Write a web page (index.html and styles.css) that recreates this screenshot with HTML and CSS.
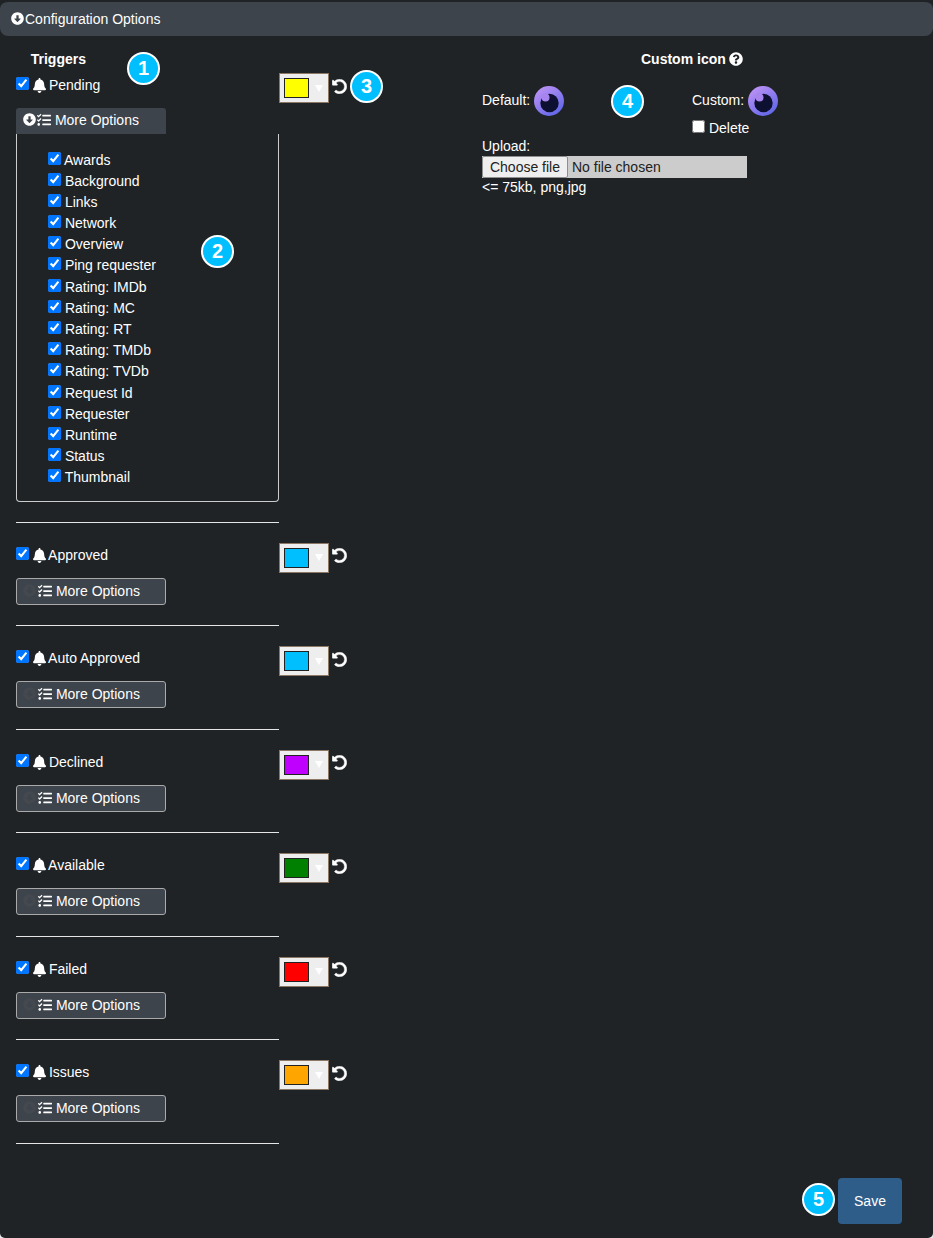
FILE: index.html
```html
<!DOCTYPE html>
<html>
<head>
  <title>Configuration Options</title>
  <link rel="stylesheet" href="styles.css">
</head>
<body>
  <svg class="defs" width="0" height="0">
    <defs>
      <symbol id="i-down" viewBox="0 0 512 512"><path d="M504 256c0 137-111 248-248 248S8 393 8 256 119 8 256 8s248 111 248 248zM212 140v116h-70.9c-10.7 0-16.1 13-8.5 20.5l114.9 114.3c4.7 4.7 12.2 4.7 16.9 0l114.9-114.3c7.6-7.6 2.2-20.5-8.5-20.5H300V140c0-6.6-5.4-12-12-12h-64c-6.6 0-12 5.4-12 12z"/></symbol>
      <symbol id="i-bell" viewBox="0 0 448 512"><path d="M224 512c35.32 0 63.97-28.65 63.97-64H160.03c0 35.35 28.65 64 63.97 64zm215.39-149.71c-19.32-20.76-55.47-51.99-55.47-154.29 0-77.7-54.48-139.9-127.94-155.16V32c0-17.67-14.32-32-31.98-32s-31.98 14.33-31.98 32v20.84C118.56 68.1 64.08 130.3 64.08 208c0 102.3-36.15 133.53-55.47 154.29-6 6.45-8.66 14.16-8.61 21.71.11 16.4 12.98 32 32.1 32h383.8c19.12 0 32-15.6 32.1-32 .05-7.55-2.61-15.27-8.61-21.71z"/></symbol>
      <symbol id="i-tasks" viewBox="0 0 512 512"><path d="M139.61 35.5a12 12 0 0 0-17 0L58.93 98.81l-22.7-22.12a12 12 0 0 0-17 0L3.53 92.41a12 12 0 0 0 0 17l47.59 47.4a12.78 12.78 0 0 0 17.61 0l15.59-15.62L156.52 69a12.09 12.09 0 0 0 .09-17zm0 159.19a12 12 0 0 0-17 0l-63.68 63.72-22.7-22.1a12 12 0 0 0-17 0L3.53 252a12 12 0 0 0 0 17L51 316.5a12.77 12.77 0 0 0 17.6 0l15.7-15.69 72.2-72.22a12 12 0 0 0 .09-16.9zM64 368c-26.49 0-48.59 21.5-48.59 48S37.53 464 64 464a48 48 0 0 0 0-96zm432 16H208a16 16 0 0 0-16 16v32a16 16 0 0 0 16 16h288a16 16 0 0 0 16-16v-32a16 16 0 0 0-16-16zm0-320H208a16 16 0 0 0-16 16v32a16 16 0 0 0 16 16h288a16 16 0 0 0 16-16V80a16 16 0 0 0-16-16zm0 160H208a16 16 0 0 0-16 16v32a16 16 0 0 0 16 16h288a16 16 0 0 0 16-16v-32a16 16 0 0 0-16-16z"/></symbol>
      <symbol id="i-undo" viewBox="0 0 512 512"><path d="M255.545 8c-66.269.119-126.438 26.233-170.86 68.685L48.971 40.971C33.851 25.851 8 36.559 8 57.941V192c0 13.255 10.745 24 24 24h134.059c21.382 0 32.09-25.851 16.971-40.971l-41.75-41.75c30.864-28.899 70.801-44.907 113.23-45.273 92.398-.798 170.283 73.977 169.484 169.442C423.236 348.009 349.816 424 256 424c-41.127 0-79.997-14.678-110.63-41.556-4.743-4.161-11.906-3.908-16.368.553L89.34 422.659c-4.872 4.872-4.631 12.815.482 17.433C133.798 479.813 192.074 504 256 504c136.966 0 247.999-111.033 248-247.998C504.001 119.193 392.354 7.755 255.545 8z"/></symbol>
      <symbol id="i-help" viewBox="0 0 512 512"><path d="M504 256c0 136.997-111.043 248-248 248S8 392.997 8 256C8 119.083 119.043 8 256 8s248 111.083 248 248zM262.655 90c-54.497 0-89.255 22.957-116.549 63.758-3.536 5.286-2.353 12.415 2.715 16.258l34.699 26.31c5.205 3.947 12.621 3.008 16.665-2.122 17.864-22.658 30.113-35.797 57.303-35.797 20.429 0 45.698 13.148 45.698 32.958 0 14.976-12.363 22.667-32.534 33.976C247.128 238.528 216 254.941 216 296v4c0 6.627 5.373 12 12 12h56c6.627 0 12-5.373 12-12v-1.333c0-28.462 83.186-29.647 83.186-106.667 0-58.002-60.165-102-116.531-102zM256 338c-25.365 0-46 20.635-46 46 0 25.364 20.635 46 46 46s46-20.636 46-46c0-25.365-20.635-46-46-46z"/></symbol>
      <linearGradient id="eye-grad" x1="0.2" y1="0.1" x2="0.8" y2="0.95">
        <stop offset="0" stop-color="#b890f4"/>
        <stop offset="1" stop-color="#5f66e8"/>
      </linearGradient>
      <symbol id="i-eye" viewBox="0 0 30 30">
        <circle cx="15" cy="15" r="15" fill="url(#eye-grad)"/>
        <circle cx="15.5" cy="17" r="9.2" fill="#0d1030"/>
        <circle cx="11.5" cy="11.5" r="4" fill="#a884ee"/>
      </symbol>
    </defs>
  </svg>

  <div class="page">
    <div class="panel-head">
      <svg class="icon icon-down"><use href="#i-down"/></svg>Configuration Options
    </div>

    <div class="panel-body">
      <div class="triggers">
        <div class="triggers-title">Triggers</div>

        <div class="trigger first">
          <div class="trigger-row">
            <label class="trigger-label"><input type="checkbox" checked><svg class="icon icon-bell"><use href="#i-bell"/></svg> Pending</label>
            <div class="picker"><span class="swatch c-yellow"></span><span class="arrow"></span></div>
            <svg class="icon icon-undo"><use href="#i-undo"/></svg>
          </div>
          <button class="more open"><svg class="icon icon-down"><use href="#i-down"/></svg><svg class="icon icon-tasks"><use href="#i-tasks"/></svg> More Options</button>
          <div class="more-box">
            <label class="opt"><input type="checkbox" checked>Awards</label>
            <label class="opt"><input type="checkbox" checked> Background</label>
            <label class="opt"><input type="checkbox" checked> Links</label>
            <label class="opt"><input type="checkbox" checked> Network</label>
            <label class="opt"><input type="checkbox" checked> Overview</label>
            <label class="opt"><input type="checkbox" checked> Ping requester</label>
            <label class="opt"><input type="checkbox" checked> Rating: IMDb</label>
            <label class="opt"><input type="checkbox" checked> Rating: MC</label>
            <label class="opt"><input type="checkbox" checked> Rating: RT</label>
            <label class="opt"><input type="checkbox" checked> Rating: TMDb</label>
            <label class="opt"><input type="checkbox" checked> Rating: TVDb</label>
            <label class="opt"><input type="checkbox" checked> Request Id</label>
            <label class="opt"><input type="checkbox" checked> Requester</label>
            <label class="opt"><input type="checkbox" checked> Runtime</label>
            <label class="opt"><input type="checkbox" checked> Status</label>
            <label class="opt"><input type="checkbox" checked> Thumbnail</label>
          </div>
        </div>

        <div class="trigger">
          <div class="trigger-row">
            <label class="trigger-label"><input type="checkbox" checked><svg class="icon icon-bell"><use href="#i-bell"/></svg> Approved</label>
            <div class="picker"><span class="swatch c-blue"></span><span class="arrow"></span></div>
            <svg class="icon icon-undo"><use href="#i-undo"/></svg>
          </div>
          <button class="more"><svg class="icon icon-down"><use href="#i-down"/></svg><svg class="icon icon-tasks"><use href="#i-tasks"/></svg> More Options</button>
        </div>

        <div class="trigger">
          <div class="trigger-row">
            <label class="trigger-label"><input type="checkbox" checked><svg class="icon icon-bell"><use href="#i-bell"/></svg> Auto Approved</label>
            <div class="picker"><span class="swatch c-blue"></span><span class="arrow"></span></div>
            <svg class="icon icon-undo"><use href="#i-undo"/></svg>
          </div>
          <button class="more"><svg class="icon icon-down"><use href="#i-down"/></svg><svg class="icon icon-tasks"><use href="#i-tasks"/></svg> More Options</button>
        </div>

        <div class="trigger">
          <div class="trigger-row">
            <label class="trigger-label"><input type="checkbox" checked><svg class="icon icon-bell"><use href="#i-bell"/></svg> Declined</label>
            <div class="picker"><span class="swatch c-purple"></span><span class="arrow"></span></div>
            <svg class="icon icon-undo"><use href="#i-undo"/></svg>
          </div>
          <button class="more"><svg class="icon icon-down"><use href="#i-down"/></svg><svg class="icon icon-tasks"><use href="#i-tasks"/></svg> More Options</button>
        </div>

        <div class="trigger">
          <div class="trigger-row">
            <label class="trigger-label"><input type="checkbox" checked><svg class="icon icon-bell"><use href="#i-bell"/></svg> Available</label>
            <div class="picker"><span class="swatch c-green"></span><span class="arrow"></span></div>
            <svg class="icon icon-undo"><use href="#i-undo"/></svg>
          </div>
          <button class="more"><svg class="icon icon-down"><use href="#i-down"/></svg><svg class="icon icon-tasks"><use href="#i-tasks"/></svg> More Options</button>
        </div>

        <div class="trigger">
          <div class="trigger-row">
            <label class="trigger-label"><input type="checkbox" checked><svg class="icon icon-bell"><use href="#i-bell"/></svg> Failed</label>
            <div class="picker"><span class="swatch c-red"></span><span class="arrow"></span></div>
            <svg class="icon icon-undo"><use href="#i-undo"/></svg>
          </div>
          <button class="more"><svg class="icon icon-down"><use href="#i-down"/></svg><svg class="icon icon-tasks"><use href="#i-tasks"/></svg> More Options</button>
        </div>

        <div class="trigger">
          <div class="trigger-row">
            <label class="trigger-label"><input type="checkbox" checked><svg class="icon icon-bell"><use href="#i-bell"/></svg> Issues</label>
            <div class="picker"><span class="swatch c-orange"></span><span class="arrow"></span></div>
            <svg class="icon icon-undo"><use href="#i-undo"/></svg>
          </div>
          <button class="more"><svg class="icon icon-down"><use href="#i-down"/></svg><svg class="icon icon-tasks"><use href="#i-tasks"/></svg> More Options</button>
        </div>
      </div>

      <div class="custom">
        <div class="custom-title">Custom icon <svg class="icon icon-help"><use href="#i-help"/></svg></div>
        <div class="custom-row">
          <div class="custom-cell">
            <span>Default:</span>
            <svg class="eye"><use href="#i-eye"/></svg>
          </div>
          <div class="custom-cell">
            <div class="custom-cell-top">
              <span>Custom:</span>
              <svg class="eye"><use href="#i-eye"/></svg>
            </div>
            <label class="delete"><input type="checkbox"> Delete</label>
          </div>
        </div>
        <div class="upload">
          <div>Upload:</div>
          <div class="file"><button class="file-btn">Choose file</button><span>No file chosen</span></div>
          <div>&lt;= 75kb, png,jpg</div>
        </div>
      </div>
    </div>

    <div class="actions">
      <button class="save">Save</button>
    </div>

    <span class="marker m1">1</span>
    <span class="marker m2">2</span>
    <span class="marker m3">3</span>
    <span class="marker m4">4</span>
    <span class="marker m5">5</span>
  </div>
</body>
</html>
```

FILE: styles.css
```css
html, body { margin: 0; padding: 0; background: #e8e8e8; }
body { font-family: "Liberation Sans", Arial, sans-serif; font-size: 14px; color: #fff; }
.defs { position: absolute; }
.page { position: relative; width: 933px; height: 1238px; overflow: hidden; background: #1f2326; border-radius: 0 0 5px 5px; }

.icon { fill: currentColor; display: inline-block; }
.icon-down { width: 13px; height: 13px; margin-right: 1px; vertical-align: -1px; }
.icon-bell { width: 13px; height: 15px; margin: 0 -1px 0 4px; vertical-align: -3px; }
.icon-tasks { width: 14px; height: 14px; vertical-align: -2px; }
.icon-undo { width: 15px; height: 15px; margin: 5.5px 0 0 3px; stroke: currentColor; stroke-width: 14px; }
.icon-help { width: 14px; height: 14px; vertical-align: -2px; margin-left: -1px; }

.panel-head {
  height: 34px; line-height: 34px; padding-left: 11px;
  background: #3e444c; border-radius: 8px; border-top: 2px solid #1f2326;
}

.panel-body { display: flex; padding: 0 16px; }
.triggers { width: 466px; }
.triggers-title { width: 70px; margin-top: 15px; height: 22px; line-height: 16px; text-align: right; font-weight: bold; }

.trigger { width: 263px; padding-bottom: 20.3px; margin-bottom: 20.2px; border-bottom: 1px solid #e6e6e6; }
.trigger.first { padding-bottom: 19.7px; }
.trigger-row { display: flex; width: 340px; height: 30px; margin-bottom: 5px; }
.trigger-label { width: 263px; padding-top: 4px; line-height: 16px; }
.trigger-label input { margin: 0; vertical-align: 0; }

.picker { width: 48px; height: 28px; border: 1px solid #8b7764; background: #eee; display: flex; align-items: center; }
.swatch { width: 23px; height: 18px; margin-left: 4px; border: 1px solid #222; }
.arrow { width: 0; height: 0; margin-left: 6px; border: 4px solid transparent; border-top: 7px solid #fff; border-bottom: 0; }
.c-yellow { background: #ffff00; }
.c-blue { background: #00bfff; }
.c-purple { background: #bf00ff; }
.c-green { background: #008000; }
.c-red { background: #ff0000; }
.c-orange { background: #ffa500; }

.more {
  display: block; box-sizing: border-box; width: 150px; height: 27px; padding: 0 0 1px 6px; text-align: left;
  font: 14px "Liberation Sans", Arial, sans-serif; color: #fff;
  background: #3e444c; border: 1px solid #aaa; border-radius: 3px;
}
.more .icon-down { color: #44494f; margin-right: 2px; }
.more.open { height: 26px; border: 0; border-radius: 3px 3px 0 0; padding: 0 0 2px 7px; }
.more.open .icon-down { color: #fff; margin-right: 1px; }

.more-box {
  box-sizing: border-box; height: 368px; padding: 15.55px 0 0 31px;
  border: 1px solid #ccc; border-top: 0; border-radius: 0 0 4px 4px;
}
.opt { display: block; height: 21.2px; line-height: 21px; }
.opt input { margin: 0; vertical-align: 0; }
.opt:first-child input { margin-right: 3px; }

.custom { width: 300px; }
.custom-title { margin: 15px 0 0 159px; line-height: 16px; font-weight: bold; }
.custom-row { display: flex; margin-top: 19px; height: 52px; }
.custom-cell { width: 210px; display: flex; align-items: flex-start; gap: 4px; line-height: 28px; }
.custom-cell:last-child { display: block; width: 90px; }
.custom-cell-top { display: flex; gap: 4px; height: 30px; }
.eye { width: 30px; height: 30px; }
.delete { display: block; margin-top: 4px; line-height: 16px; }
.delete input { margin: 0; vertical-align: 0; }

.upload { line-height: 16px; }
.file { display: flex; align-items: center; gap: 4px; width: 265px; height: 22px; margin: 2px 0 1px; background: #ccc; color: #222; }
.file-btn {
  box-sizing: border-box; width: 86px; height: 22px; padding: 0; background: #efefef; color: #222;
  border: 1px solid #8f8f8f; border-radius: 2px; font: 14px "Liberation Sans", Arial, sans-serif;
}

.actions { position: absolute; right: 31px; top: 1178px; }
.save { width: 64px; height: 46px; border: 0; border-radius: 4px; background: #2f5d8a; color: #fff; font: 14px "Liberation Sans", Arial, sans-serif; }

.marker {
  position: absolute; box-sizing: border-box; width: 33px; height: 33px; line-height: 29px; text-align: center;
  border: 2px solid #fff; border-radius: 50%; background: #00bfff; color: #fff; font-size: 20px; font-weight: bold;
}
.m1 { left: 127px; top: 52px; }
.m2 { left: 201px; top: 235px; }
.m3 { left: 350px; top: 70px; }
.m4 { left: 611px; top: 85px; }
.m5 { left: 802px; top: 1183px; }
```
